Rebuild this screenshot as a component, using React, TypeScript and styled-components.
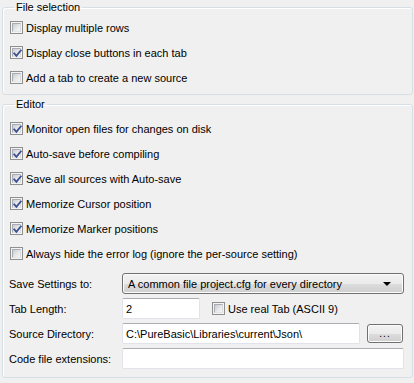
import React from "react";
import styled, { createGlobalStyle } from "styled-components";

const GlobalStyle = createGlobalStyle`
  html, body {
    margin: 0;
    padding: 0;
    background: #f0f0f0;
  }
  body {
    font-family: "Liberation Sans", Arial, sans-serif;
    font-size: 11px;
    color: #000;
  }
`;

const Dialog = styled.div`
  width: 414px;
  height: 383px;
  background: #f0f0f0;
  display: flex;
  flex-direction: column;
  gap: 2px;
  overflow: hidden;
`;

const Group = styled.fieldset`
  margin: 0 1px 0 2px;
  padding: ${(p: { $pt: number; $pb: number }) => `${p.$pt}px 7px ${p.$pb}px 7px`};
  border: 1px solid #d5dfe5;
  border-radius: 3px;
  box-shadow: inset 1px 1px 0 #fff;
  min-width: 0;
`;

const Legend = styled.legend`
  margin-left: 4px;
  padding: 0 2px;
  line-height: 14px;
  height: 14px;
`;

const CheckRow = styled.label`
  display: flex;
  align-items: center;
  gap: 3px;
  height: 25px;
  white-space: nowrap;
`;

const Box = styled.span<{ $checked?: boolean }>`
  width: 13px;
  height: 13px;
  box-sizing: border-box;
  border: 1px solid #8e8f8f;
  background: #f4f4f4;
  padding: 1px;
  display: flex;
  flex-shrink: 0;

  &::before {
    content: "";
    flex: 1;
    background: linear-gradient(135deg, #c8ccd2 0%, #e6e7e9 55%, #f7f7f7 100%);
    border: 1px solid #b4b7bb;
    border-color: #a9adb3 #d8d9db #e4e4e4 #a9adb3;
  }
  position: relative;
`;

const Tick = styled.svg`
  position: absolute;
  left: 0;
  top: 0;
`;

const FormGrid = styled.div`
  display: grid;
  grid-template-columns: 113px 1fr;
  grid-auto-rows: 25px;
  align-items: center;
  margin: 5px 0 0 -1px;
  padding-right: 1px;
`;

const FieldLabel = styled.span`
  white-space: nowrap;
`;

const Combo = styled.div`
  height: 21px;
  box-sizing: border-box;
  border: 1px solid #707070;
  border-radius: 3px;
  background: linear-gradient(#f2f2f2 0%, #ebebeb 50%, #dddddd 50%, #cfcfcf 100%);
  box-shadow: inset 0 0 0 1px #fcfcfc;
  display: flex;
  align-items: center;
  padding: 0 12px 0 5px;
  justify-content: space-between;
`;

const Arrow = styled.span`
  width: 0;
  height: 0;
  border-left: 4px solid transparent;
  border-right: 4px solid transparent;
  border-top: 4px solid #000;
`;

const InlineRow = styled.div`
  display: flex;
  align-items: center;
  gap: 12px;
`;

const TextInput = styled.div<{ $w?: number }>`
  height: 21px;
  box-sizing: border-box;
  width: ${(p) => (p.$w ? `${p.$w}px` : "auto")};
  flex: ${(p) => (p.$w ? "none" : "1")};
  background: #fff;
  border: 1px solid #e2e3ea;
  border-top-color: #abadb3;
  border-radius: 2px;
  padding: 0 3px;
  display: flex;
  align-items: center;
  white-space: nowrap;
  overflow: hidden;
`;

const PathRow = styled.div`
  display: flex;
  align-items: center;
  gap: 7px;
  margin-right: 1px;
`;

const SmallButton = styled.div`
  width: 36px;
  height: 19px;
  box-sizing: border-box;
  border: 1px solid #707070;
  border-radius: 3px;
  background: linear-gradient(#f2f2f2 0%, #ebebeb 50%, #dddddd 50%, #cfcfcf 100%);
  box-shadow: inset 0 0 0 1px #fcfcfc;
  display: flex;
  align-items: center;
  justify-content: center;
  font-size: 10px;
  letter-spacing: 1px;
`;

const InlineCheck = styled(CheckRow)`
  height: 21px;
`;

function CheckBox({ checked }: { checked?: boolean }) {
  return (
    <Box $checked={checked}>
      {checked && (
        <Tick width="13" height="13" viewBox="0 0 13 13">
          <path d="M3.2 6.4 L5.4 8.8 L9.8 3.4" fill="none" stroke="#3c4f91" strokeWidth="1.8" strokeLinecap="square" />
        </Tick>
      )}
    </Box>
  );
}

const fileOptions = [
  { text: "Display multiple rows", checked: false },
  { text: "Display close buttons in each tab", checked: true },
  { text: "Add a tab to create a new source", checked: false },
];

const editorOptions = [
  { text: "Monitor open files for changes on disk", checked: true },
  { text: "Auto-save before compiling", checked: true },
  { text: "Save all sources with Auto-save", checked: true },
  { text: "Memorize Cursor position", checked: true },
  { text: "Memorize Marker positions", checked: true },
  { text: "Always hide the error log (ignore the per-source setting)", checked: false },
];

export default function App() {
  return (
    <>
      <GlobalStyle />
      <Dialog>
        <Group $pt={1} $pb={4}>
          <Legend>File selection</Legend>
          {fileOptions.map((o) => (
            <CheckRow key={o.text}>
              <CheckBox checked={o.checked} />
              {o.text}
            </CheckRow>
          ))}
        </Group>
        <Group $pt={5} $pb={6}>
          <Legend>Editor</Legend>
          {editorOptions.map((o) => (
            <CheckRow key={o.text}>
              <CheckBox checked={o.checked} />
              {o.text}
            </CheckRow>
          ))}
          <FormGrid>
            <FieldLabel>Save Settings to:</FieldLabel>
            <Combo>
              A common file project.cfg for every directory
              <Arrow />
            </Combo>
            <FieldLabel>Tab Length:</FieldLabel>
            <InlineRow>
              <TextInput $w={78}>2</TextInput>
              <InlineCheck>
                <CheckBox />
                Use real Tab (ASCII 9)
              </InlineCheck>
            </InlineRow>
            <FieldLabel>Source Directory:</FieldLabel>
            <PathRow>
              <TextInput>C:\PureBasic\Libraries\current\Json\</TextInput>
              <SmallButton>...</SmallButton>
            </PathRow>
            <FieldLabel>Code file extensions:</FieldLabel>
            <TextInput />
          </FormGrid>
        </Group>
      </Dialog>
    </>
  );
}
